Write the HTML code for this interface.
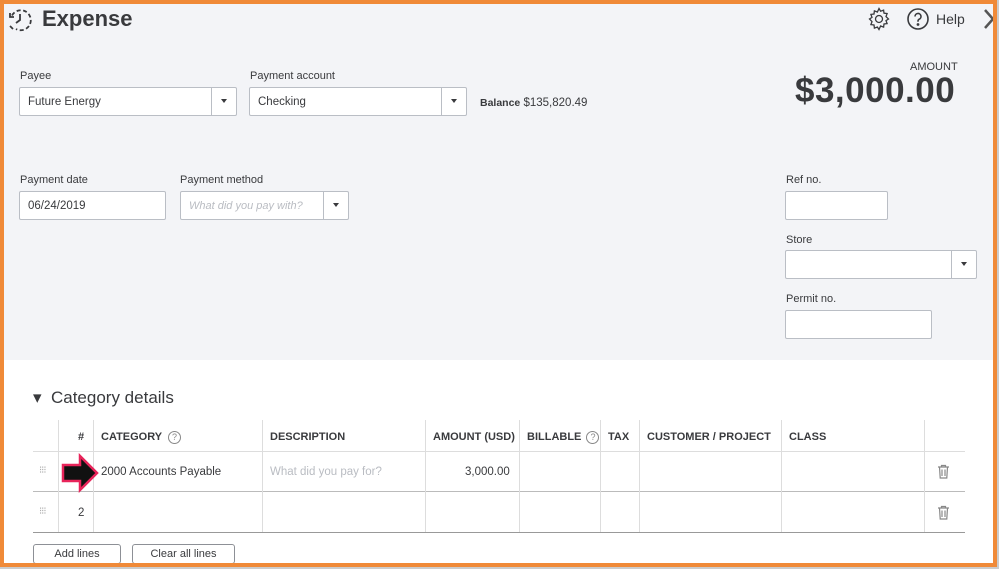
<!DOCTYPE html>
<html><head><style>
*{box-sizing:border-box;margin:0;padding:0}
body{width:999px;height:569px;overflow:hidden;background:#fff;font-family:"Liberation Sans",sans-serif;color:#393a3d;position:relative}
.a{position:absolute}
.gray{left:0;top:0;width:999px;height:360px;background:#f3f4f7}
.lbl{font-size:11px;color:#393a3d}
.inp{background:#fff;border:1px solid #babec5;border-radius:2px;height:29px;font-size:11.5px;padding:8px 8px}
.dd{position:absolute;right:0;top:0;width:25px;height:27px;border-left:1px solid #babec5}
.dd:after{content:"";position:absolute;left:9px;top:11px;border:3.5px solid transparent;border-top:4px solid #393a3d}
.th{font-size:11px;font-weight:bold;color:#393a3d;top:431px}
.vl{width:1px;background:#ddd}
.hl{height:1px;background:#ccc}
.btn{border:1px solid #8d9096;border-radius:3px;height:20px;font-size:11px;text-align:center;line-height:18px;background:#fff}
</style></head><body>
<div class="a gray"></div>
<svg class="a" style="left:7px;top:7px" width="26" height="26" viewBox="0 0 26 26" fill="none" stroke="#393a3d" stroke-width="1.8"><path d="M5 8.5A10 10 0 1 1 9 22" stroke-dasharray="4 2.5"/><path d="M13 7v6l-4 3"/><path d="M3 19l3 3"/><path d="M3 6v4h4"/></svg>
<div class="a" style="left:42px;top:6px;font-size:22px;font-weight:bold;color:#393a3d">Expense</div>
<svg class="a" style="left:867px;top:7px" width="24" height="24" viewBox="0 0 24 24" fill="none" stroke="#393a3d" stroke-width="1.3"><circle cx="12" cy="12" r="3.5"/><path d="M12 1.5l1.6 2.7 3-1.1.4 3.1 3.1.4-1.1 3L21.5 12l-2.5 1.6 1.1 3-3.1.4-.4 3.1-3-1.1L12 22.5l-1.6-2.5-3 1.1-.4-3.1-3.1-.4 1.1-3L2.5 12 5 10.4l-1.1-3 3.1-.4.4-3.1 3 1.1z"/></svg>
<svg class="a" style="left:906px;top:7px" width="24" height="24" viewBox="0 0 24 24" fill="none" stroke="#393a3d" stroke-width="1.6"><circle cx="12" cy="12" r="10"/><path d="M9 9.5a3 3 0 1 1 4 2.8c-.8.4-1 1-1 2v.5"/><circle cx="12" cy="17.5" r=".6" fill="#393a3d"/></svg>
<div class="a" style="left:936px;top:11px;font-size:14px;color:#393a3d">Help</div>
<svg class="a" style="left:982px;top:8px" width="14" height="22" viewBox="0 0 14 22" fill="none" stroke="#555" stroke-width="2.5"><path d="M3 2l8 9-8 9"/></svg>
<div class="a" style="left:910px;top:61px;font-size:11px">AMOUNT</div>
<div class="a" style="left:795px;top:71px;font-size:35px;font-weight:bold;color:#393a3d;letter-spacing:0.5px">$3,000.00</div>
<div class="a lbl" style="left:20px;top:70px">Payee</div>
<div class="a inp" style="left:19px;top:87px;width:218px">Future Energy<div class="dd"></div></div>
<div class="a lbl" style="left:250px;top:70px">Payment account</div>
<div class="a inp" style="left:249px;top:87px;width:218px">Checking<div class="dd"></div></div>
<div class="a" style="left:480px;top:97px;font-size:11.5px"><b style="font-size:10.5px">Balance</b> $135,820.49</div>
<div class="a lbl" style="left:20px;top:174px">Payment date</div>
<div class="a inp" style="left:19px;top:191px;width:147px">06/24/2019</div>
<div class="a lbl" style="left:180px;top:174px">Payment method</div>
<div class="a inp" style="left:180px;top:191px;width:169px;color:#b9bcc2;font-style:italic;font-size:11px">What did you pay with?<div class="dd"></div></div>
<div class="a lbl" style="left:786px;top:174px">Ref no.</div>
<div class="a inp" style="left:785px;top:191px;width:103px"></div>
<div class="a lbl" style="left:786px;top:234px">Store</div>
<div class="a inp" style="left:785px;top:250px;width:192px"><div class="dd"></div></div>
<div class="a lbl" style="left:786px;top:293px">Permit no.</div>
<div class="a inp" style="left:785px;top:310px;width:147px"></div>
<div class="a" style="left:33px;top:388px;font-size:17px;color:#393a3d">▾&nbsp; Category details</div>
<div class="a hl" style="left:33px;top:451px;width:932px;background:#ddd"></div>
<div class="a hl" style="left:33px;top:491px;width:932px;background:#bbb"></div>
<div class="a hl" style="left:33px;top:532px;width:932px;background:#999"></div>
<div class="a vl" style="left:58px;top:420px;height:112px"></div>
<div class="a vl" style="left:93px;top:420px;height:112px"></div>
<div class="a vl" style="left:262px;top:420px;height:112px"></div>
<div class="a vl" style="left:425px;top:420px;height:112px"></div>
<div class="a vl" style="left:519px;top:420px;height:112px"></div>
<div class="a vl" style="left:600px;top:420px;height:112px"></div>
<div class="a vl" style="left:639px;top:420px;height:112px"></div>
<div class="a vl" style="left:781px;top:420px;height:112px"></div>
<div class="a vl" style="left:924px;top:420px;height:112px"></div>
<div class="a th" style="left:78px">#</div>
<div class="a th" style="left:101px">CATEGORY <span style="display:inline-block;width:13px;height:13px;border:1px solid #888;border-radius:50%;font-size:9px;font-weight:normal;text-align:center;line-height:11px;color:#888;margin-left:3px">?</span></div>
<div class="a th" style="left:270px">DESCRIPTION</div>
<div class="a th" style="left:433px">AMOUNT (USD)</div>
<div class="a th" style="left:527px">BILLABLE <span style="display:inline-block;width:13px;height:13px;border:1px solid #888;border-radius:50%;font-size:9px;font-weight:normal;text-align:center;line-height:11px;color:#888;margin-left:2px">?</span></div>
<div class="a th" style="left:608px">TAX</div>
<div class="a th" style="left:647px">CUSTOMER / PROJECT</div>
<div class="a th" style="left:789px">CLASS</div>
<div class="a" style="left:39px;top:465px;font-size:10px;color:#aaa;letter-spacing:-1px">⁝⁝⁝</div>
<div class="a" style="left:39px;top:506px;font-size:10px;color:#aaa;letter-spacing:-1px">⁝⁝⁝</div>
<svg class="a" style="left:60px;top:453px" width="40" height="40" viewBox="0 0 40 40"><path d="M3 12h17V3l17 17-17 17v-9H3z" fill="#111" stroke="#e8245a" stroke-width="2.5"/></svg>
<div class="a" style="left:101px;top:466px;font-size:11.5px">2000 Accounts Payable</div>
<div class="a" style="left:270px;top:466px;font-size:11.5px;color:#b9bcc2">What did you pay for?</div>
<div class="a" style="left:465px;top:466px;font-size:11.5px">3,000.00</div>
<div class="a" style="left:78px;top:507px;font-size:11.5px">2</div>
<svg class="a" style="left:937px;top:464px" width="13" height="15" viewBox="0 0 13 15" fill="none" stroke="#888" stroke-width="1.2"><path d="M1 3h11M4.5 3V1.5h4V3M2.5 3l.7 11h6.6l.7-11M5 5.5v6.5M8 5.5v6.5"/></svg>
<svg class="a" style="left:937px;top:505px" width="13" height="15" viewBox="0 0 13 15" fill="none" stroke="#888" stroke-width="1.2"><path d="M1 3h11M4.5 3V1.5h4V3M2.5 3l.7 11h6.6l.7-11M5 5.5v6.5M8 5.5v6.5"/></svg>
<div class="a btn" style="left:33px;top:544px;width:88px">Add lines</div>
<div class="a btn" style="left:132px;top:544px;width:103px">Clear all lines</div>
<div class="a" style="left:0;top:0;width:997px;height:567px;border:4px solid #f08a38"></div>
<div class="a" style="left:997px;top:0;width:2px;height:569px;background:#ccc"></div>
<div class="a" style="left:0;top:567px;width:999px;height:2px;background:#ccc"></div>
</body></html>
